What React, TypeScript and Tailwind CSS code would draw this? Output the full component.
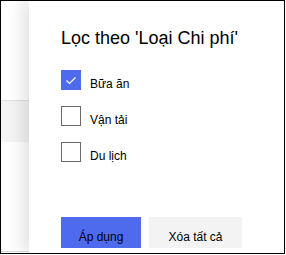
import React from "react";

function Box({ checked }: { checked?: boolean }) {
  if (checked) {
    return (
      <div className="w-[20px] h-[20px] bg-[#4f6bed] flex items-center justify-center shrink-0">
        <svg width="20" height="20" viewBox="0 0 20 20">
          <path d="M5.5 10.5 L8.5 13.5 L14.5 7.5" fill="none" stroke="white" strokeWidth="1.2" />
        </svg>
      </div>
    );
  }
  return <div className="w-[20px] h-[20px] border border-[#6b6b6b] bg-white shrink-0" />;
}

function Row({ label, checked }: { label: string; checked?: boolean }) {
  return (
    <div className="flex items-start h-[20px]">
      <Box checked={checked} />
      <span className="ml-[9px] mt-[6px] text-[12px] leading-[16px] text-black">{label}</span>
    </div>
  );
}

export default function App() {
  return (
    <div className="w-[286px] h-[255px] bg-white" style={{ fontFamily: '"Liberation Sans", Arial, sans-serif' }}>
      <div className="w-[285px] h-[254px] border border-black flex overflow-hidden">
        <div className="w-[28px] flex flex-col shrink-0 bg-white">
          <div className="h-[99px]" />
          <div className="h-[1px] bg-[#e1e1e1]" />
          <div className="h-[41px] bg-[#f4f4f4]" />
          <div className="flex-1" />
          <div className="h-[1px] bg-[#d6d6d6]" />
          <div className="h-[1px]" />
        </div>
        <div className="flex-1 bg-white relative z-10 shadow-[-8px_0_14px_rgba(0,0,0,0.10)] pl-[32px] pt-[25px] flex flex-col">
          <div className="text-[18px] leading-[24px] text-black whitespace-nowrap">Lọc theo 'Loại Chi phí'</div>
          <div className="mt-[20px] flex flex-col gap-[16px]">
            <Row label="Bữa ăn" checked />
            <Row label="Vận tải" />
            <Row label="Du lịch" />
          </div>
          <div className="mt-[55px] flex gap-[8px]">
            <button className="w-[80px] h-[31px] bg-[#4f6bed] text-black text-[12px] leading-[16px] pt-[12px] flex justify-center">Áp dụng</button>
            <button className="w-[93px] h-[31px] bg-[#f3f3f3] text-black text-[12px] leading-[16px] pt-[12px] flex justify-center">Xóa tất cả</button>
          </div>
        </div>
      </div>
    </div>
  );
}
